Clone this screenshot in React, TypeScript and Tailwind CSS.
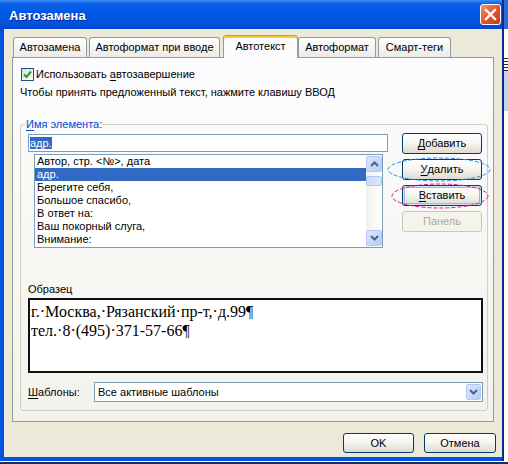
import React from 'react';

const Mn: React.FC<{ children: React.ReactNode }> = ({ children }) => (
  <span className="underline underline-offset-[2px]">{children}</span>
);

const ScrollButton: React.FC<{ up?: boolean }> = ({ up }) => (
  <div className="w-[16px] h-[16px] rounded-[2px] border border-[#b4c8f6] bg-linear-to-br from-[#dde7fd] to-[#b7ccf7] flex items-center justify-center">
    <svg width="9" height="6" viewBox="0 0 9 6">
      <path d={up ? 'M1 5 L4.5 1.5 L8 5' : 'M1 1 L4.5 4.5 L8 1'} fill="none" stroke="#4d6185" strokeWidth="2" />
    </svg>
  </div>
);

const XpButton: React.FC<{ children: React.ReactNode; className: string; disabled?: boolean; isDefault?: boolean }> = ({
  children,
  className,
  disabled = false,
  isDefault = false,
}) => (
  <div
    className={`flex items-center justify-center rounded-[3px] border text-[11px] leading-[13px] ${
      disabled
        ? 'border-[#c9c7ba] bg-[#f5f4ea] text-[#aca899]'
        : 'border-[#003c74] bg-linear-to-b from-[#ffffff] via-[#f5f4ef] to-[#dedacf] text-black'
    } ${isDefault ? 'shadow-[inset_0_0_0_1px_#cee7ff,inset_0_0_0_2px_#98b8ea]' : ''} ${className}`}
  >
    {children}
  </div>
);

const Tab: React.FC<{ label: string; className: string }> = ({ label, className }) => (
  <div
    className={`h-[20px] mb-[1px] flex items-center justify-center rounded-t-[3px] border border-b-0 border-[#919b9c] bg-linear-to-b from-[#ffffff] to-[#ecebe6] text-[11px] text-black ${className}`}
  >
    {label}
  </div>
);

const items = [
  'Автор, стр. <№>, дата',
  'адр.',
  'Берегите себя,',
  'Большое спасибо,',
  'В ответ на:',
  'Ваш покорный слуга,',
  'Внимание:',
];

const Dialog: React.FC = () => (
  <div className="flex h-[461px]">
    <div className="w-[502px] flex flex-col">
      {/* Title bar */}
      <div className="h-[29px] flex items-start bg-[linear-gradient(to_bottom,#3d8ef8_0%,#0f63ea_12%,#0058e6_40%,#0053e0_80%,#0046cc_100%)]">
        <span className="pl-[9px] pt-[8px] text-white font-bold text-[13px] leading-[16px] [text-shadow:1px_1px_0_#0b2a8a]">
          Автозамена
        </span>
        <div className="ml-auto mr-[1px] mt-[4px] w-[21px] h-[21px] rounded-[3px] border border-white bg-linear-to-br from-[#f3926c] via-[#e0552f] to-[#c13a1a] flex items-center justify-center">
          <svg width="19" height="19" viewBox="0 0 19 19">
            <path d="M5 5 L14 14 M14 5 L5 14" stroke="#ffffff" strokeWidth="2.4" strokeLinecap="square" />
          </svg>
        </div>
      </div>

      {/* Body */}
      <div className="flex-1 flex flex-col border-l-4 border-b-4 border-[#0053e1] bg-[#ece9d8] text-[11px] leading-[13px] text-black">
        {/* Tabs */}
        <div className="relative z-10 mt-[6px] h-[23px] ml-[9px] flex items-end">
          <Tab label="Автозамена" className="w-[74px]" />
          <Tab label="Автоформат при вводе" className="ml-[2px] w-[131px]" />
          <div className="ml-[3px] w-[75px] h-[23px] pb-[1px] flex items-center justify-center rounded-t-[3px] border border-b-0 border-[#919b9c] border-t-[#e68b2c] bg-[#fcfcfe] shadow-[inset_0_2px_0_#ffc73c] text-[11px]">
            Автотекст
          </div>
          <Tab label="Автоформат" className="w-[78px]" />
          <Tab label="Смарт-теги" className="ml-[2px] w-[73px]" />
        </div>

        {/* Tab page */}
        <div className="ml-[8px] -mt-[1px] w-[482px] h-[365px] border border-[#919b9c] bg-linear-to-b from-[#fcfcfe] to-[#f3f2ec] flex flex-col">
          <div className="mt-[10px] ml-[8px] h-[13px] flex items-center">
            <div className="w-[13px] h-[13px] border border-[#1c5180] bg-linear-to-br from-[#dcdcd7] to-[#ffffff] flex items-center justify-center">
              <svg width="9" height="9" viewBox="0 0 9 9">
                <path d="M1 4.5 L3.5 7 L8 1.5" fill="none" stroke="#21a121" strokeWidth="2" />
              </svg>
            </div>
            <span className="ml-[2px]">
              Использовать <Mn>а</Mn>втозавершение
            </span>
          </div>
          <div className="mt-[5px] ml-[7px]">Чтобы принять предложенный текст, нажмите клавишу ВВОД</div>

          <fieldset className="ml-[7px] mt-[19px] w-[468px] border border-[#d0d0bf] rounded-[3px] pb-[8px]">
            <legend className="ml-[4px] px-[1px] text-[#0046d5] leading-[13px]">
              <Mn>И</Mn>мя элемента:
            </legend>

            <div className="flex mt-[2px]">
              <div className="ml-[7px] mt-[1px] flex flex-col">
                <div className="w-[360px] h-[18px] border border-[#7f9db9] bg-white flex items-center pl-[1px]">
                  <span className="bg-[#316ac5] text-white leading-[12px]">адр.</span>
                </div>
                <div className="ml-[6px] mt-[2px] w-[349px] h-[94px] border border-[#7f9db9] bg-white flex">
                  <div className="flex-1 flex flex-col">
                    {items.map((it) => (
                      <div
                        key={it}
                        className={`h-[13px] pl-[2px] leading-[13px] whitespace-nowrap ${
                          it === 'адр.' ? 'bg-[#316ac5] text-white' : ''
                        }`}
                      >
                        {it}
                      </div>
                    ))}
                  </div>
                  <div className="w-[16px] flex flex-col py-[1px] bg-linear-to-r from-[#f3f1ec] to-[#fefefb]">
                    <ScrollButton up />
                    <div className="mt-[4px] h-[10px] rounded-[2px] border border-[#b4c8f6] bg-linear-to-r from-[#c9d8fb] to-[#dce6fd]" />
                    <div className="flex-1" />
                    <ScrollButton />
                  </div>
                </div>
              </div>

              <div className="ml-[14px] flex flex-col gap-[5px]">
                <XpButton className="w-[80px] h-[21px]">
                  <Mn>Д</Mn>обавить
                </XpButton>
                <div className="relative">
                  <XpButton className="w-[80px] h-[21px]">
                    <Mn>У</Mn>далить
                  </XpButton>
                  <svg className="absolute left-[-15px] top-[-2px]" width="104" height="25" viewBox="0 0 104 25">
                    <ellipse cx="52" cy="12.5" rx="51" ry="11.5" fill="none" stroke="#1e8ef0" strokeWidth="1" strokeDasharray="4 2" />
                  </svg>
                </div>
                <div className="relative">
                  <XpButton className="w-[80px] h-[21px]" isDefault>
                    <Mn>В</Mn>ставить
                  </XpButton>
                  <svg className="absolute left-[-11px] top-[-2px]" width="98" height="26" viewBox="0 0 98 26">
                    <ellipse cx="49" cy="13" rx="48" ry="12" fill="none" stroke="#e8157a" strokeWidth="1" strokeDasharray="4 2" />
                  </svg>
                </div>
                <XpButton className="w-[80px] h-[21px]" disabled>
                  Панель
                </XpButton>
              </div>
            </div>

            <div className="mt-[35px] ml-[7px]">Образец</div>
            <div className="mt-[2px] ml-[7px] w-[455px] h-[75px] border-2 border-[#111111] bg-white pl-[1px] pt-[2px] font-['Liberation_Serif',serif] text-[16px] leading-[19px]">
              <div>г.·Москва,·Рязанский·пр-т,·д.99¶</div>
              <div>тел.·8·(495)·371-57-66¶</div>
            </div>

            <div className="mt-[9px] ml-[7px] flex items-center">
              <div className="w-[66px]">
                <Mn>Ш</Mn>аблоны:
              </div>
              <div className="w-[389px] h-[20px] border border-[#7f9db9] bg-white flex items-center p-[1px]">
                <span className="pl-[2px] flex-1">Все активные шаблоны</span>
                <div className="w-[15px] h-full rounded-[2px] border border-[#b4c8f6] bg-linear-to-br from-[#dde7fd] to-[#b7ccf7] flex items-center justify-center">
                  <svg width="9" height="6" viewBox="0 0 9 6">
                    <path d="M1 1 L4.5 4.5 L8 1" fill="none" stroke="#4d6185" strokeWidth="2" />
                  </svg>
                </div>
              </div>
            </div>
          </fieldset>
        </div>

        {/* Dialog buttons */}
        <div className="mt-[11px] flex justify-end gap-[10px] pr-[6px]">
          <XpButton className="w-[71px] h-[20px]">OK</XpButton>
          <XpButton className="w-[72px] h-[20px]">Отмена</XpButton>
        </div>
      </div>
    </div>
    <div className="w-[2px] bg-[#0a2a8c]" />
  </div>
);

const App: React.FC = () => {
  return (
    <div className="w-[508px] h-[464px] bg-white flex flex-col overflow-hidden font-['Liberation_Sans',Arial,sans-serif]">
      <div className="flex h-[461px]">
        <Dialog />
        <div className="w-[4px] flex flex-col bg-white">
          <div className="h-[29px] bg-[#3168d5]" />
          <div className="h-[29px]" />
          <div className="h-[13px] bg-[repeating-linear-gradient(to_bottom,#222222_0_1px,#ffffff_1px_3px)]" />
          <div className="h-[40px] bg-[#c6d3ee]" />
          <div className="flex-1" />
        </div>
      </div>
      <div className="h-[1px] bg-white" />
      <div className="h-[2px] bg-[#1b2b68]" />
    </div>
  );
};

export default App;
